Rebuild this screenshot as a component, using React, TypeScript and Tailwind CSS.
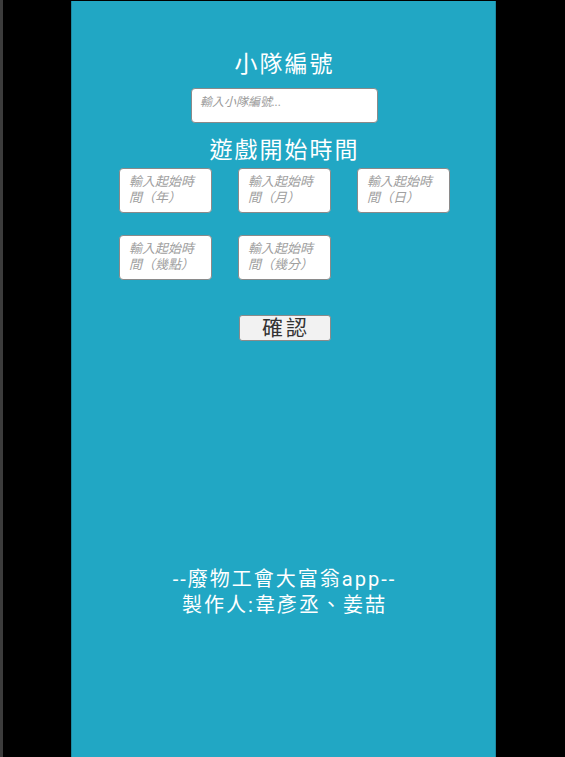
import React from "react";

const font = { fontFamily: '"Roboto", "Noto Sans CJK TC", "Noto Sans", sans-serif' };

const timeFields = ["年", "月", "日", "幾點", "幾分"];

export default function App() {
  return (
    <div className="flex w-[565px] h-[757px] bg-black overflow-hidden" style={font}>
      <div className="w-[3px] h-full bg-[#3c3c3c]" />
      <div className="ml-[68px] mt-px w-[425px] h-[756px] bg-[#21a7c4] border-x border-[#1c8aa3] flex flex-col items-center pt-[49px] pl-[2px]">
        <h1 className="text-[23px] leading-[30px] tracking-[2px] text-white font-normal">小隊編號</h1>
        <input
          className="mt-[8px] w-[187px] h-[35px] bg-white border border-[#8a8a8a] rounded-[4px] px-[8px] pb-[8px] text-[12px] italic outline-none placeholder:text-[#9a9a9a] placeholder:italic"
          placeholder="輸入小隊編號..."
        />
        <h2 className="mt-[13px] text-[23px] leading-[30px] tracking-[2px] text-white font-normal">遊戲開始時間</h2>
        <div className="mt-[2px] grid grid-cols-[93px_93px_93px] gap-x-[26px] gap-y-[22px]">
          {timeFields.map((f) => (
            <textarea
              key={f}
              className="w-[93px] h-[45px] resize-none overflow-hidden bg-white border border-[#8a8a8a] rounded-[4px] pl-[9px] pr-[8px] pt-[5px] text-[13px] leading-[16px] italic outline-none placeholder:text-[#a0a0a0] placeholder:italic"
              placeholder={`輸入起始時間（${f}）`}
            />
          ))}
        </div>
        <button className="mt-[35px] w-[92px] h-[26px] bg-[#f2f2f2] border border-[#8a8a8a] rounded-[3px] text-[21px] leading-[24px] tracking-[3px] pl-[3px] text-[#333] flex items-center justify-center">
          確認
        </button>
        <div className="mt-[225px] text-center text-white text-[20px] leading-[26px] tracking-[2px]">
          <p>--廢物工會大富翁app--</p>
          <p>製作人:韋彥丞、姜喆</p>
        </div>
      </div>
    </div>
  );
}
